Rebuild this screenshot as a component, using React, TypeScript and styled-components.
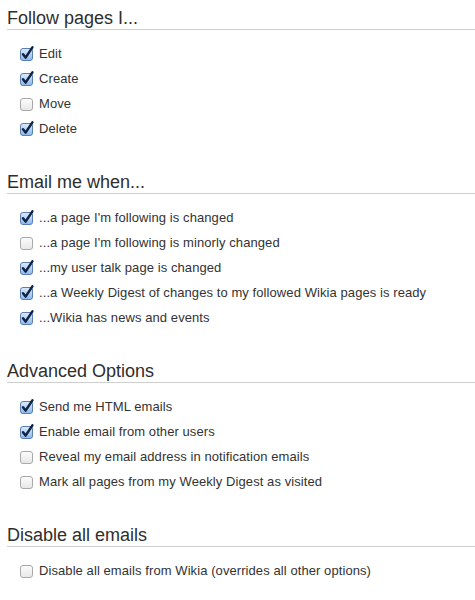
import React from "react";
import styled, { createGlobalStyle } from "styled-components";

const Global = createGlobalStyle`
  html, body { margin: 0; padding: 0; background: #fff; }
  body { font-family: "Liberation Sans", Arial, Helvetica, sans-serif; color: #333; }
`;

const Page = styled.div`
  width: 475px;
  padding-left: 7px;
  box-sizing: border-box;
`;

const Section = styled.section`
  margin-bottom: 30px;
`;

const Heading = styled.h2`
  margin: 7px 0 0;
  padding: 0;
  font-size: 18px;
  font-weight: normal;
  line-height: 22px;
  color: #2e2e2e;
  border-bottom: 1px solid #cfcfcf;
`;

const List = styled.ul`
  list-style: none;
  margin: 11px 0 0;
  padding: 0 0 0 13px;
`;

const Row = styled.li`
  display: flex;
  align-items: center;
  height: 25px;
  font-size: 13px;
  letter-spacing: 0.08px;
  color: #333;
`;

const Label = styled.label`
  display: flex;
  align-items: center;
  gap: 5px;
`;

const BoxSvg = styled.svg`
  width: 14px;
  height: 14px;
  flex: none;
  overflow: visible;
`;

function Check({ checked }: { checked: boolean }) {
  return (
    <BoxSvg viewBox="0 0 14 14">
      <defs>
        <linearGradient id="cbOn" x1="0" y1="0" x2="0" y2="1">
          <stop offset="0" stopColor="#dcebfd" />
          <stop offset="1" stopColor="#8db8ec" />
        </linearGradient>
        <linearGradient id="cbOff" x1="0" y1="0" x2="0" y2="1">
          <stop offset="0" stopColor="#fdfdfd" />
          <stop offset="1" stopColor="#e6e6e6" />
        </linearGradient>
      </defs>
      <rect
        x="0.5"
        y="1.5"
        width="12"
        height="12"
        rx="2.5"
        fill={checked ? "url(#cbOn)" : "url(#cbOff)"}
        stroke={checked ? "#5a7fb0" : "#a9a9a9"}
        strokeWidth="1"
      />
      {checked && (
        <path
          d="M3 7.2 L5.6 10.6 L12.4 0.4"
          fill="none"
          stroke="#0f2343"
          strokeWidth="2.5"
          strokeLinecap="round"
          strokeLinejoin="round"
        />
      )}
    </BoxSvg>
  );
}

type Item = { label: string; checked: boolean };

const sections: { title: string; items: Item[] }[] = [
  {
    title: "Follow pages I...",
    items: [
      { label: "Edit", checked: true },
      { label: "Create", checked: true },
      { label: "Move", checked: false },
      { label: "Delete", checked: true },
    ],
  },
  {
    title: "Email me when...",
    items: [
      { label: "...a page I'm following is changed", checked: true },
      { label: "...a page I'm following is minorly changed", checked: false },
      { label: "...my user talk page is changed", checked: true },
      { label: "...a Weekly Digest of changes to my followed Wikia pages is ready", checked: true },
      { label: "...Wikia has news and events", checked: true },
    ],
  },
  {
    title: "Advanced Options",
    items: [
      { label: "Send me HTML emails", checked: true },
      { label: "Enable email from other users", checked: true },
      { label: "Reveal my email address in notification emails", checked: false },
      { label: "Mark all pages from my Weekly Digest as visited", checked: false },
    ],
  },
  {
    title: "Disable all emails",
    items: [{ label: "Disable all emails from Wikia (overrides all other options)", checked: false }],
  },
];

export default function App() {
  return (
    <Page>
      <Global />
      {sections.map((s) => (
        <Section key={s.title}>
          <Heading>{s.title}</Heading>
          <List>
            {s.items.map((it) => (
              <Row key={it.label}>
                <Label>
                  <Check checked={it.checked} />
                  {it.label}
                </Label>
              </Row>
            ))}
          </List>
        </Section>
      ))}
    </Page>
  );
}
